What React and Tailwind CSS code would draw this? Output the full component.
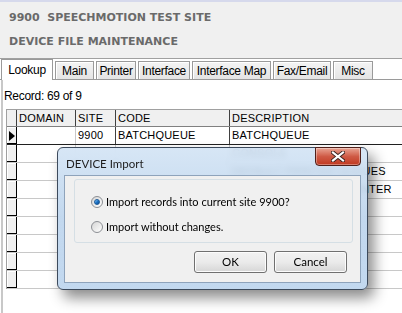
import React from 'react';

const tabs = ['Main', 'Printer', 'Interface', 'Interface Map', 'Fax/Email', 'Misc'];
const tabWidths = ['w-[39px]', 'w-[40px]', 'w-[52px]', 'w-[79px]', 'w-[58px]', 'w-[40px]'];

const rows = [
  { site: '9900', code: 'BATCHQUEUE', desc: 'BATCHQUEUE' },
  { site: '', code: '', desc: 'CONSOLE' },
  { site: '', code: '', desc: 'DEFAULT PRINTER QUEUES' },
  { site: '', code: '', desc: 'DEFAULT A4 LASER PRINTER' },
  {}, {}, {}, {}, {},
];

const Radio = ({ checked }) => (
  <span className="w-[12px] h-[12px] rounded-full border border-[#8c8f94] bg-gradient-to-br from-[#d6d6d6] to-[#ffffff] flex items-center justify-center shrink-0">
    {checked && (
      <span className="w-[6px] h-[6px] rounded-full bg-gradient-to-br from-[#8ed0ff] via-[#1d75c8] to-[#0b4a92] border border-[#1b5a9a]" />
    )}
  </span>
);

const WinButton = ({ children }) => (
  <button className="w-[73px] h-[22px] rounded-[3px] border border-[#707070] bg-gradient-to-b from-[#f2f2f2] via-[#ebebeb] to-[#d6d6d6] text-[11.5px] text-black shadow-[inset_0_0_0_1px_#fcfcfc]">
    {children}
  </button>
);

const Dialog = () => (
  <div className="absolute left-[57px] top-[147px] w-[311px] h-[143px] rounded-[6px] border border-[#3c4a5c] bg-gradient-to-b from-[#d3e4f5]/90 via-[#bcd4ed]/90 to-[#c2d8ef] backdrop-blur-[3px] shadow-[6px_8px_14px_rgba(0,0,0,0.45)] font-['Lato',sans-serif]">
    <div className="h-[27px] flex items-start justify-between pl-[8px] pr-[6px]">
      <span className="text-[11.5px] leading-none text-[#1e1e1e] mt-[10px]">DEVICE Import</span>
      <div className="w-[46px] h-[19px] -mt-px rounded-b-[4px] border border-[#50201a] bg-gradient-to-b from-[#e8a494] via-[#cf5a45] to-[#c0381f] flex items-center justify-center shadow-[inset_0_0_0_1px_rgba(255,255,255,0.35)]">
        <svg width="14" height="11" viewBox="0 0 14 11">
          <path d="M2 1.5 L12 9.5 M12 1.5 L2 9.5" stroke="#3a2320" strokeWidth="4" strokeLinecap="square" />
          <path d="M2 1.5 L12 9.5 M12 1.5 L2 9.5" stroke="#ffffff" strokeWidth="2.2" strokeLinecap="square" />
        </svg>
      </div>
    </div>
    <div className="mx-[6px] h-[108px] border border-[#8ea3bb] bg-[#f0f0f0] flex flex-col">
      <div className="ml-[9px] mr-[7px] mt-[3px] h-[64px] border border-[#d5dfe5] rounded-[3px] flex flex-col gap-[11px] pt-[15px] pl-[16px] text-[11px] text-black">
        <label className="h-[14px] flex items-center gap-[3px]">
          <Radio checked />
          <span>Import records into current site 9900?</span>
        </label>
        <label className="h-[14px] flex items-center gap-[3px]">
          <Radio />
          <span>Import without changes.</span>
        </label>
      </div>
      <div className="flex justify-end gap-[7px] mt-[8px] mr-[13px]">
        <WinButton>OK</WinButton>
        <WinButton>Cancel</WinButton>
      </div>
    </div>
  </div>
);

export default function App() {
  return (
    <div className="relative w-[402px] h-[313px] overflow-hidden bg-white font-['Liberation_Sans',sans-serif]">
      {/* header */}
      <div className="h-[59px] bg-[#f0f0f0] border-t-2 border-[#d6d9ec] border-b border-b-[#a0a0a0] pl-[9px] pt-[9px] font-['DejaVu_Sans',sans-serif] font-bold text-[11px] text-[#6a6a6a]">
        <div className="h-[24px] leading-[14px]">9900&nbsp;&nbsp;SPEECHMOTION TEST SITE</div>
        <div className="leading-[14px]">DEVICE FILE MAINTENANCE</div>
      </div>

      {/* tabs */}
      <div className="h-[21px] flex items-end bg-white border-b border-[#9a9a9a] text-[12px] text-black tracking-[-0.3px]">
        <div className="ml-[1px] w-[52px] h-[21px] -mb-px bg-white border border-b-0 border-[#9a9a9a] flex items-center justify-center">Lookup</div>
        {tabs.map((t, i) => (
          <div
            key={t}
            className={`${tabWidths[i]} h-[18px] ml-[2px] border border-b-0 border-[#9a9a9a] bg-gradient-to-b from-[#f4f4f4] to-[#e4e4e4] shadow-[inset_1px_1px_0_#ffffff] flex items-center justify-center`}
          >
            {t}
          </div>
        ))}
      </div>

      {/* content */}
      <div className="border-l-2 border-[#c8c8c8] ml-[1px] h-full">
        <div className="h-[29px] pl-[1px] pt-[9px] leading-[14px] text-[12px] text-black tracking-[-0.3px]">Record: 69 of 9</div>
        <div className="ml-[3px] border-l border-t border-[#a0a0a0] text-[11px] text-black tracking-[0.2px]">
          {/* header row */}
          <div className="flex h-[17px] bg-[#f0f0f0] border-b border-[#808080]">
            <div className="w-[10px] border-r border-[#404040]" />
            <div className="w-[59px] border-r border-[#404040] pl-[2px] leading-[17px]">DOMAIN</div>
            <div className="w-[40px] border-r border-[#404040] pl-[2px] leading-[17px]">SITE</div>
            <div className="w-[114px] border-r border-[#404040] pl-[2px] leading-[17px]">CODE</div>
            <div className="flex-1 pl-[2px] leading-[17px]">DESCRIPTION</div>
          </div>
          {rows.map((r, i) => (
            <div key={i} className={`flex h-[18px] border-b ${i === 0 ? 'border-[#202020]' : 'border-[#c8c8c8]'}`}>
              <div className="w-[10px] bg-[#f0f0f0] border-r border-[#000] shadow-[inset_0_-1px_0_#000,inset_1px_1px_0_#fff] flex items-center justify-center">
                {i === 0 && (
                  <svg width="6" height="10" viewBox="0 0 6 10"><path d="M0 0 L6 5 L0 10 Z" fill="#000" /></svg>
                )}
              </div>
              <div className="w-[59px] border-r border-[#c8c8c8]" />
              <div className={`w-[40px] border-r pl-[2px] leading-[17px] ${i === 0 ? 'border-[#404040]' : 'border-[#c8c8c8]'}`}>{r.site}</div>
              <div className={`w-[114px] border-r pl-[2px] leading-[17px] ${i === 0 ? 'border-[#404040]' : 'border-[#c8c8c8]'}`}>{r.code}</div>
              <div className="flex-1 pl-[2px] leading-[17px] whitespace-nowrap">{r.desc}</div>
            </div>
          ))}
        </div>
      </div>

      <Dialog />
    </div>
  );
}
